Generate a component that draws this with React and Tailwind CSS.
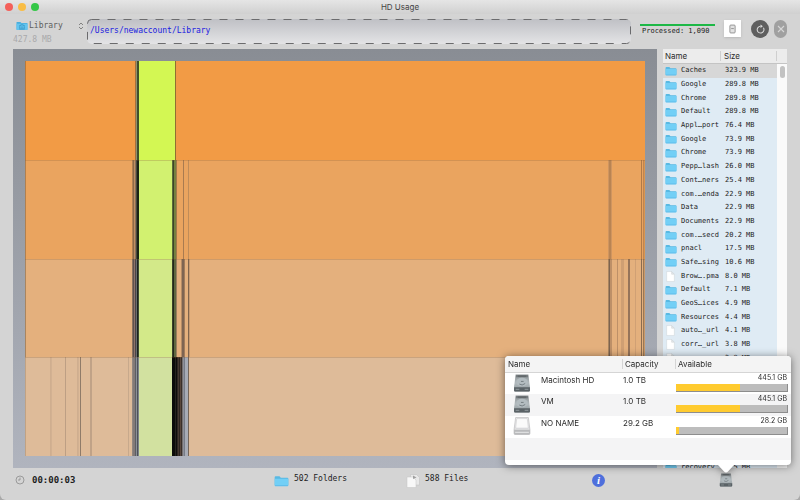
import React from "react";

const FILES = [
  ["Caches", "323.9 MB", "folder"],
  ["Google", "289.8 MB", "folder"],
  ["Chrome", "289.8 MB", "folder"],
  ["Default", "289.8 MB", "folder"],
  ["Appl…port", "76.4 MB", "folder"],
  ["Google", "73.9 MB", "folder"],
  ["Chrome", "73.9 MB", "folder"],
  ["Pepp…lash", "26.0 MB", "folder"],
  ["Cont…ners", "25.4 MB", "folder"],
  ["com.…enda", "22.9 MB", "folder"],
  ["Data", "22.9 MB", "folder"],
  ["Documents", "22.9 MB", "folder"],
  ["com.…secd", "20.2 MB", "folder"],
  ["pnacl", "17.5 MB", "folder"],
  ["Safe…sing", "10.6 MB", "folder"],
  ["Brow….pma", "8.0 MB", "file"],
  ["Default", "7.1 MB", "folder"],
  ["GeoS…ices", "4.9 MB", "folder"],
  ["Resources", "4.4 MB", "folder"],
  ["auto…_url", "4.1 MB", "file"],
  ["corr…_url", "3.8 MB", "file"],
  ["", "3.8 MB", "file"],
  ["", "", "file"],
  ["", "", "file"],
  ["", "", "file"],
  ["", "", "file"],
  ["", "", "file"],
  ["", "", "file"],
  ["", "", "file"],
  ["recovery", "2.5 MB", "folder"],
];

const VOLUMES = [
  { name: "Macintosh HD", capacity: "1.0 TB", free: "445.1 GB", used: 58, dark: true },
  { name: "VM", capacity: "1.0 TB", free: "445.1 GB", used: 58, dark: true },
  { name: "NO NAME", capacity: "29.2 GB", free: "28.2 GB", used: 3, dark: false },
];

// Each level: background colour, then [x, width, colour] slices
const LEVELS = [
  {
    fill: "#f29b45",
    slices: [
      [0, 1, "#b87a3c"],
      [110, 1, "#a5703c"],
      [111, 1, "#8f9070"],
      [112, 2, "#41502a"],
      [114, 36, "#d3f753"],
      [150, 1, "#8f7030"],
    ],
  },
  {
    fill: "#eaa45f",
    slices: [
      [0, 1, "#b08050"],
      [107, 1, "#b08050"],
      [108, 1, "#8f6a4a"],
      [109, 1, "#c09060"],
      [110, 1, "#8b7058"],
      [111, 1, "#4a4a40"],
      [112, 2, "#1c2414"],
      [114, 33, "#d2f170"],
      [147, 1, "#5b6a38"],
      [148, 1, "#3c4428"],
      [149, 2, "#76803f"],
      [151, 1, "#a07a4c"],
      [158, 1, "#a97b50"],
      [163, 1, "#c08c58"],
      [583, 1, "#cf9560"],
      [584, 2, "#b98453"],
      [586, 1, "#cf9560"],
      [616, 1, "#b07a48"],
      [618, 1, "#c08550"],
      [619, 1, "#d8954f"],
    ],
  },
  {
    fill: "#e4b07d",
    slices: [
      [0, 1, "#a98560"],
      [107, 1, "#88705c"],
      [108, 1, "#5f5250"],
      [109, 1, "#8d7468"],
      [110, 1, "#4c4648"],
      [111, 1, "#6a6c70"],
      [112, 1, "#1c241c"],
      [113, 1, "#3f4a34"],
      [114, 33, "#d3e989"],
      [147, 1, "#3a4228"],
      [148, 1, "#22281a"],
      [149, 2, "#5f6740"],
      [151, 1, "#9a8060"],
      [156, 1, "#b58c66"],
      [157, 2, "#7d6452"],
      [159, 1, "#a07c5c"],
      [163, 1, "#80644c"],
      [164, 1, "#c79a70"],
      [583, 1, "#a98560"],
      [584, 1, "#7c6350"],
      [585, 2, "#bd9068"],
      [592, 1, "#bd9068"],
      [596, 3, "#cf9f73"],
      [603, 2, "#96745a"],
      [610, 1, "#d0a074"],
      [616, 1, "#8a6c50"],
      [618, 1, "#9a7855"],
      [619, 1, "#c89868"],
    ],
  },
  {
    fill: "#debb99",
    slices: [
      [0, 1, "#c0a284"],
      [25, 1, "#cfae8f"],
      [26, 1, "#d2b192"],
      [40, 1, "#bd9f84"],
      [52, 1, "#cfae8f"],
      [53, 1, "#d2b192"],
      [55, 1, "#8f7b69"],
      [65, 2, "#c0a287"],
      [103, 1, "#c7a98c"],
      [107, 1, "#8f8680"],
      [108, 2, "#827a78"],
      [110, 1, "#5d5f64"],
      [111, 1, "#8b8f98"],
      [112, 1, "#4d5156"],
      [113, 1, "#7c828a"],
      [114, 33, "#d2e1a0"],
      [147, 3, "#0b0c0a"],
      [150, 1, "#25241e"],
      [151, 1, "#0d0c0b"],
      [152, 1, "#2c2622"],
      [153, 1, "#453830"],
      [154, 1, "#2b241f"],
      [155, 1, "#5a473b"],
      [156, 1, "#3a2f2a"],
      [157, 1, "#75706f"],
      [158, 1, "#8e909a"],
      [159, 1, "#777b85"],
      [160, 3, "#a7abb5"],
      [163, 1, "#756558"],
    ],
  },
];

const Folder = ({ className }) => (
  <svg viewBox="0 0 22 18" className={className} preserveAspectRatio="none" aria-hidden="true">
    <path d="M1 3.500Q1 2 2.500 2H8l2 2h9.500Q21 4 21 5.500V15Q21 16.500 19.500 16.500h-17Q1 16.500 1 15Z" fill="#58b9e3" />
    <path d="M1 5.500h20v9.700Q21 16.700 19.500 16.700h-17Q1 16.700 1 15.200Z" fill="#72cff6" />
    <path d="M1.500 15.900h19" stroke="#5cb9e8" strokeWidth="1.200" />
  </svg>
);

const Page = ({ className }) => (
  <svg viewBox="0 0 16 20" className={className} aria-hidden="true">
    <path d="M1 1h9l5 5V19H1Z" fill="#fff" stroke="#c9cfd3" strokeWidth=".8" />
    <path d="M10 1v5h5Z" fill="#e4e8ea" stroke="#c9cfd3" strokeWidth=".8" />
  </svg>
);

const Drive = ({ dark, className }) => (
  <svg viewBox="0 0 32 34" className={className} aria-hidden="true">
    <defs>
      <linearGradient id="metal" x1="0" y1="0" x2="0" y2="1">
        <stop offset="0" stopColor="#8b9194" />
        <stop offset="0.500" stopColor="#b2babd" />
        <stop offset="1" stopColor="#8d969a" />
      </linearGradient>
      <linearGradient id="shell" x1="0" y1="0" x2="0" y2="1">
        <stop offset="0" stopColor="#f4f4f5" />
        <stop offset="1" stopColor="#dcdcde" />
      </linearGradient>
    </defs>
    {dark ? (
      <g>
        <path d="M4 1h24l3 23v7q0 2-2 2H3q-2 0-2-2v-7Z" fill="url(#metal)" />
        <path d="M5 2h22l.6 4H4.400Z" fill="#767c7f" />
        <path d="M8 4h16" stroke="#505659" strokeWidth="1.500" />
        <ellipse cx="16" cy="15" rx="11" ry="8" fill="#b3bcc0" />
        <path d="M11 19q5 4 11-1M14 14h5" stroke="#646d71" strokeWidth="1.500" fill="none" />
        <path d="M1 25h30v6q0 2-2 2H3q-2 0-2-2Z" fill="#5a6266" />
        <path d="M4 29h7M21 29h7" stroke="#858d91" strokeWidth="2" />
      </g>
    ) : (
      <g>
        <path d="M4 1h24l3 23v7q0 2-2 2H3q-2 0-2-2v-7Z" fill="url(#shell)" stroke="#a8a8aa" />
        <path d="M6 3h20l2 18H4Z" fill="#fafafa" stroke="#c6c6c8" />
        <path d="M1 24h30v7q0 2-2 2H3q-2 0-2-2Z" fill="#b9babc" />
        <path d="M3 29h26" stroke="#dedfe0" strokeWidth="2" />
      </g>
    )}
  </svg>
);

function Chart() {
  return (
    <svg
      viewBox="0 0 620 395"
      preserveAspectRatio="none"
      className="absolute inset-0 size-full"
      shapeRendering="crispEdges"
      role="img"
      aria-label="Disk usage by folder level"
    >
      {LEVELS.map((level, i) => {
        const y = [0, 99, 198, 296][i];
        const h = [99, 99, 98, 99][i];
        return (
          <g key={i}>
            <rect x="0" y={y} width="620" height={h} fill={level.fill} />
            {level.slices.map(([x, w, fill]) => (
              <rect key={x} x={x} y={y} width={w} height={h} fill={fill} />
            ))}
            {i > 0 && <rect x="0" y={y} width="620" height="1" fill="#8a5a30" fillOpacity="0.25" />}
          </g>
        );
      })}
    </svg>
  );
}

function Toolbar() {
  return (
    <div className="flex h-[35px] shrink-0 items-start px-[13px]">
      <div className="mt-[5px] w-[72px] shrink-0">
        <button type="button" className="flex h-[13px] w-full items-center text-[8px] text-[#5d5d5d]">
          <svg viewBox="0 0 22 18" className="ml-[3px] mr-px h-[11px] w-[12px]" aria-hidden="true">
            <path d="M1 2.500h7l2 2h11v12.500H1Z" fill="#49aede" />
            <path d="M1 6h20v11H1Z" fill="#63c5f0" />
            <path d="M6 9.500l5-2 5 2M7 10.500v4M11 10.500v4M15 10.500v4M6 15.500h10" stroke="#2786b8" strokeWidth="1.300" fill="none" />
          </svg>
          <span className="flex-1 text-left">Library</span>
          <svg viewBox="0 0 6 8" className="mr-px h-[8px] w-[6px]" fill="none" stroke="#777" strokeWidth=".9" aria-hidden="true">
            <path d="M1 3l2-2 2 2M1 5l2 2 2-2" />
          </svg>
        </button>
        <div className="mt-[3px] text-[8px] leading-[10px] text-[#a9a9ab]">427.8 MB</div>
      </div>
      <div className="relative ml-[2px] mt-[5px] h-[25px] flex-1">
        <input
          aria-label="Path"
          defaultValue="/Users/newaccount/Library"
          className="block h-full w-full rounded-[5px] bg-linear-to-b from-[#bfc0c5] to-[#e4e4e6] px-[3px] pb-[3px] text-[8px] text-[#1a1ae0] outline-none"
        />
        <svg className="pointer-events-none absolute left-0 top-0 h-[calc(100%-1px)] w-[calc(100%-1px)] overflow-visible" aria-hidden="true">
          <rect x="0.500" y="0.500" width="100%" height="100%" rx="4" fill="none" stroke="#6b6b6d" strokeDasharray="8 8" />
        </svg>
      </div>
      <div className="ml-[9px] mt-[10px] w-[75px] shrink-0">
        <div className="h-[2px] bg-[#1db846]" />
        <div className="pl-[2px] text-[7px] leading-[10px] text-[#1c1c1c]">Processed: 1,090</div>
      </div>
      <button type="button" aria-label="Select disk" className="ml-[9px] mt-[6px] flex h-[17px] w-[17px] shrink-0 items-center justify-center bg-white shadow-sm">
        <svg viewBox="0 0 8 11" className="h-[10px] w-[7px]" fill="#e2e2e2" stroke="#8c8c8c" aria-hidden="true">
          <rect x="1" y="1" width="6" height="9" rx="1" />
          <path d="M2.500 5h3" />
        </svg>
      </button>
      <button type="button" aria-label="Refresh" className="ml-[10px] mt-[6px] flex size-[18px] shrink-0 items-center justify-center rounded-full bg-[#5f5f5f]">
        <svg viewBox="0 0 12 12" className="size-[11px]" fill="none" stroke="#dcdcdc" strokeWidth="1.100" aria-hidden="true">
          <path d="M9.200 4.200A3.700 3.700 0 1 1 6 2.500" />
          <path d="M6 .6l2.600 1.900L6 4.400Z" fill="#dcdcdc" stroke="none" />
        </svg>
      </button>
      <button type="button" aria-label="Cancel" className="ml-[5px] mt-[6px] flex h-[18px] w-[13px] shrink-0 items-center justify-center rounded-full bg-[#a0a0a0]">
        <svg viewBox="0 0 8 8" className="size-[8px]" stroke="#d6d6d6" strokeWidth="1.100" aria-hidden="true">
          <path d="M1 1l6 6M7 1L1 7" />
        </svg>
      </button>
    </div>
  );
}

function FileList() {
  return (
    <div className="flex h-full w-[124px] shrink-0 flex-col overflow-hidden bg-[#fafafa]">
      <div className="flex h-[15px] shrink-0 items-center border-b border-[#c4c4c4] bg-[#ececec] font-['Inter',sans-serif] text-[8px] leading-[10px] text-[#2b2b2b]">
        <span className="w-[58px] border-r border-[#cfcfcf] pl-[2px]">Name</span>
        <span className="w-[56px] border-r border-[#cfcfcf] pl-[3px]">Size</span>
      </div>
      <div className="flex min-h-0 flex-1 items-start">
        <table aria-label="Largest items" className="h-[411px] w-[114px] shrink-0 table-fixed border-collapse bg-[#dfebf4] text-[7px] leading-[9px] text-[#1c1c1c]">
          <tbody>
            {FILES.map(([name, size, kind], i) => (
              <tr key={i} className={i === 0 ? "bg-[#d7d7d7]" : ""}>
                <td className="w-[18px] p-0 pl-[2px]">
                  <div className="flex h-[9px] items-center">
                    {kind === "folder" ? (
                      <Folder className="h-[10px] w-[12px] shrink-0" />
                    ) : (
                      <Page className="ml-px h-[11px] w-[9px] shrink-0" />
                    )}
                  </div>
                </td>
                <td className="w-[44px] p-0 whitespace-nowrap">{name}</td>
                <td className="p-0 whitespace-nowrap">{size}</td>
              </tr>
            ))}
          </tbody>
        </table>
        <div className="flex flex-1 justify-center pt-[2px]">
          <div className="h-[12px] w-[5px] rounded-full bg-[#c2c2c2]" />
        </div>
      </div>
    </div>
  );
}

function VolumesPopover() {
  return (
    <div className="absolute bottom-[35px] right-[9px] w-[286px] font-['Inter',sans-serif] text-[8px] text-[#2b2b2b] drop-shadow-[0_1px_4px_rgba(0,0,0,0.5)]">
      <div className="h-[109px] overflow-hidden rounded-[4px] bg-white">
        <table className="w-full table-fixed border-collapse">
          <thead>
            <tr className="h-[16px] border-b border-[#d5d5d5] bg-[#f4f4f4] text-left leading-[10px]">
              <th className="w-[117px] p-0 pl-[3px] font-normal">Name</th>
              <th className="w-[53px] p-0 font-normal"><div className="border-l border-[#d5d5d5] pl-[2px]">Capacity</div></th>
              <th className="p-0 font-normal"><div className="border-l border-[#d5d5d5] pl-[2px]">Available</div></th>
            </tr>
          </thead>
          <tbody>
            {VOLUMES.map((v) => (
              <tr key={v.name} className="h-[22px] even:bg-[#f4f4f5]">
                <td className="p-0 align-top">
                  <div className="flex pl-[8px]">
                    <Drive dark={v.dark} className="mt-px h-[18px] w-[18px]" />
                    <span className="ml-[10px] mt-[2px] leading-[10px]">{v.name}</span>
                  </div>
                </td>
                <td className="p-0 pl-px pt-[2px] align-top leading-[10px]">{v.capacity}</td>
                <td className="p-0 pl-px pr-[3px] align-top">
                  <div className="pr-px text-right text-[7px] leading-[10px]">{v.free}</div>
                  <div className="mt-px h-[8px] border-b border-r border-[#8d8d8d] bg-[#bdbdbd]">
                    <div className="h-full bg-[#ffcb2f]" style={{ width: `${v.used}%` }} />
                  </div>
                </td>
              </tr>
            ))}
            <tr className="h-[22px] bg-[#f4f4f5]"><td colSpan={3} className="p-0" /></tr>
          </tbody>
        </table>
      </div>
      <svg viewBox="0 0 16 8" className="absolute right-[57px] top-full h-[8px] w-[16px]" fill="#fff" aria-hidden="true">
        <path d="M0 0h16l-6 6.500q-2 2-4 0Z" />
      </svg>
    </div>
  );
}

export default function App() {
  return (
    <div className="h-screen bg-[#a9a9a9]">
      <main className="relative flex h-full flex-col overflow-hidden rounded-b-[6px] bg-[#d4d4d4] font-['DejaVu_Sans_Mono',monospace]">
        <header className="relative flex h-[14px] shrink-0 items-center justify-center bg-linear-to-b from-[#e5e5e5] to-[#d0d0d0] font-['Inter',sans-serif]">
          <div className="absolute left-[5px] flex gap-[5px]">
            <button type="button" aria-label="Close" className="size-[8px] rounded-full bg-[#f4605a]" />
            <button type="button" aria-label="Minimize" className="size-[8px] rounded-full bg-[#f9bd45]" />
            <button type="button" aria-label="Zoom" className="size-[8px] rounded-full bg-[#35c748]" />
          </div>
          <h1 className="text-[8px] leading-[10px] text-[#444]">HD Usage</h1>
        </header>
        <Toolbar />
        <div className="flex min-h-0 flex-1 gap-[6px] px-[13px]">
          <section className="flex flex-1 bg-linear-to-b from-[#898d94] to-[#b0b4be] p-[12px]">
            <div className="relative flex-1">
              <Chart />
            </div>
          </section>
          <FileList />
        </div>
        <footer className="flex h-[32px] shrink-0 items-start pl-[15px] text-[#1c1c1c]">
          <div className="flex w-[259px] items-center pt-[6px]">
            <svg viewBox="0 0 10 10" className="size-[10px]" fill="none" stroke="#8b8b8b" strokeWidth=".8" aria-hidden="true">
              <circle cx="5" cy="5" r="4" />
              <path d="M5 2.500V5H3" />
            </svg>
            <span className="ml-[7px] text-[9px] leading-[12px] font-bold">00:00:03</span>
          </div>
          <div className="flex w-[132px] items-start pt-[6px] text-[8px] leading-[10px]">
            <Folder className="mt-px h-[12px] w-[15px]" />
            <span className="ml-[5px]">502 Folders</span>
          </div>
          <div className="flex w-[186px] items-start pt-[6px] text-[8px] leading-[10px]">
            <svg viewBox="0 0 28 28" className="size-[14px]" aria-hidden="true">
              <path d="M9 1h12l6 6v15H9Z" fill="#e9e9e9" stroke="#bdbdbd" />
              <path d="M2 6h12l6 6v15H2Z" fill="#f8f8f8" stroke="#c4c4c4" />
              <path d="M14 3l7 4-7 3Z" fill="#9f9f9f" />
            </svg>
            <span className="ml-[5px]">588 Files</span>
          </div>
          <button type="button" aria-label="Information" className="mt-[6px] flex size-[13px] items-center justify-center rounded-full bg-[#4e6fdc] font-['Liberation_Serif',serif] text-[11px] leading-[13px] font-bold text-white italic">
            i
          </button>
          <button type="button" aria-label="Volumes" className="ml-auto mr-[67px] mt-[5px]">
            <Drive dark className="block h-[14px] w-[14px]" />
          </button>
        </footer>
        <VolumesPopover />
      </main>
    </div>
  );
}
